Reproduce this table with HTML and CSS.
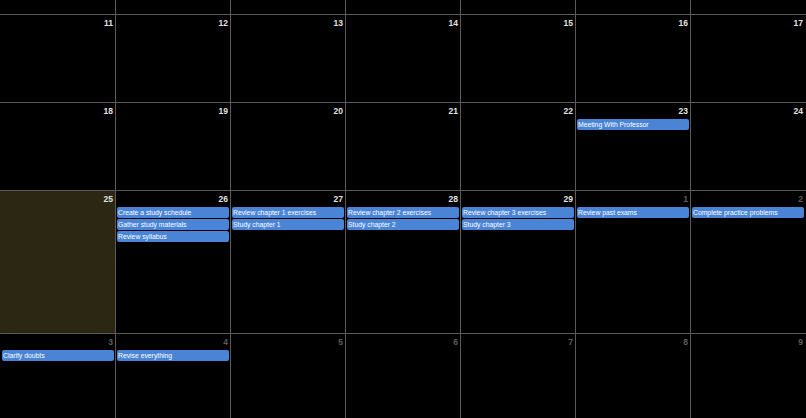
FILE: index.html
```html
<!DOCTYPE html>
<html>
<head>
<meta charset="utf-8">
<link rel="stylesheet" href="styles.css">
</head>
<body>
<div class="calendar">
  <div class="week week-partial">
    <div class="day"></div><div class="day"></div><div class="day"></div><div class="day"></div><div class="day"></div><div class="day"></div><div class="day"></div>
  </div>
  <div class="week week-normal">
    <div class="day"><div class="num">11</div></div>
    <div class="day"><div class="num">12</div></div>
    <div class="day"><div class="num">13</div></div>
    <div class="day"><div class="num">14</div></div>
    <div class="day"><div class="num">15</div></div>
    <div class="day"><div class="num">16</div></div>
    <div class="day"><div class="num">17</div></div>
  </div>
  <div class="week week-normal">
    <div class="day"><div class="num">18</div></div>
    <div class="day"><div class="num">19</div></div>
    <div class="day"><div class="num">20</div></div>
    <div class="day"><div class="num">21</div></div>
    <div class="day"><div class="num">22</div></div>
    <div class="day"><div class="num">23</div><div class="event">Meeting With Professor</div></div>
    <div class="day"><div class="num">24</div></div>
  </div>
  <div class="week week-tall">
    <div class="day today"><div class="num">25</div></div>
    <div class="day"><div class="num">26</div>
      <div class="event">Create a study schedule</div>
      <div class="event">Gather study materials</div>
      <div class="event">Review syllabus</div>
    </div>
    <div class="day"><div class="num">27</div>
      <div class="event">Review chapter 1 exercises</div>
      <div class="event">Study chapter 1</div>
    </div>
    <div class="day"><div class="num">28</div>
      <div class="event">Review chapter 2 exercises</div>
      <div class="event">Study chapter 2</div>
    </div>
    <div class="day"><div class="num">29</div>
      <div class="event">Review chapter 3 exercises</div>
      <div class="event">Study chapter 3</div>
    </div>
    <div class="day other"><div class="num">1</div>
      <div class="event">Review past exams</div>
    </div>
    <div class="day other"><div class="num">2</div>
      <div class="event">Complete practice problems</div>
    </div>
  </div>
  <div class="week week-last">
    <div class="day other"><div class="num">3</div>
      <div class="event">Clarify doubts</div>
    </div>
    <div class="day other"><div class="num">4</div>
      <div class="event">Revise everything</div>
    </div>
    <div class="day other"><div class="num">5</div></div>
    <div class="day other"><div class="num">6</div></div>
    <div class="day other"><div class="num">7</div></div>
    <div class="day other"><div class="num">8</div></div>
    <div class="day other"><div class="num">9</div></div>
  </div>
</div>
</body>
</html>
```

FILE: styles.css
```css
html, body {
  margin: 0;
  padding: 0;
  background: #000;
}
body {
  font-family: "Liberation Sans", Arial, sans-serif;
  color: #ddd;
}
.calendar {
  width: 806px;
  height: 418px;
  overflow: hidden;
  display: flex;
  flex-direction: column;
}
.week {
  display: grid;
  grid-template-columns: repeat(6, 115px) 1fr;
  box-sizing: border-box;
  flex: none;
}
.week-partial { height: 14px; }
.week-normal { height: 88px; border-top: 1px solid #5a5a5a; }
.week-tall { height: 143px; border-top: 1px solid #5a5a5a; }
.week-last { height: 120px; border-top: 1px solid #5a5a5a; }
.day {
  box-sizing: border-box;
  min-width: 0;
  border-left: 1px solid #5a5a5a;
  display: flex;
  flex-direction: column;
  padding: 0 1px 0 1px;
}
.day:first-child {
  border-left: none;
  padding-left: 2px;
}
.day:last-child {
  padding-right: 2px;
}
.today {
  background: #2b2713;
}
.num {
  height: 16px;
  box-sizing: border-box;
  padding: 3px 1px 0 0;
  text-align: right;
  font-size: 8.5px;
  font-weight: bold;
  line-height: 10px;
  color: #e2e2e2;
}
.other .num {
  color: #5e5e5e;
}
.event {
  height: 11px;
  line-height: 11px;
  margin-bottom: 1px;
  padding-left: 1px;
  background: #4a84d6;
  border-radius: 2px;
  color: #fff;
  font-size: 6.8px;
  white-space: nowrap;
  overflow: hidden;
}
```
